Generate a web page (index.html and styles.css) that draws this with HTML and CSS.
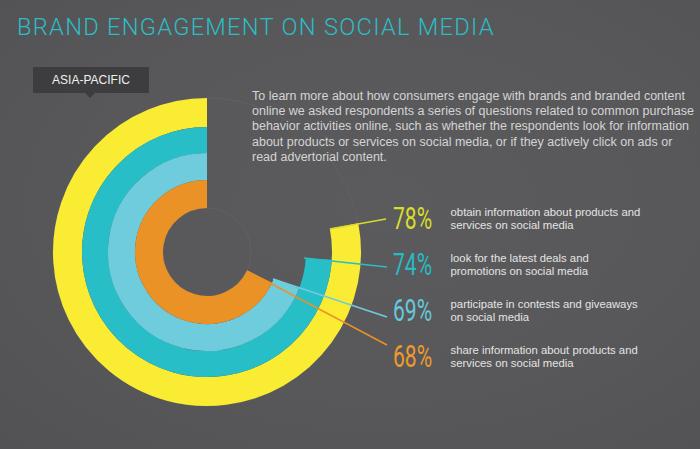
FILE: index.html
```html
<!DOCTYPE html>
<html lang="en">
<head>
<meta charset="utf-8">
<title>Brand Engagement on Social Media</title>
<link rel="stylesheet" href="styles.css">
</head>
<body>
<div class="page">
  <svg class="canvas" width="700" height="449" viewBox="0 0 700 449" aria-hidden="true">
    <circle cx="207" cy="252" r="154" fill="none" stroke="#616163" stroke-width="1"/>
    <circle cx="207" cy="252" r="44" fill="none" stroke="#616163" stroke-width="1"/>
    <path d="M207 112.5 A139.5 139.5 0 1 0 344.03 225.86" fill="none" stroke="#f9ec33" stroke-width="29"/>
    <path d="M207 140 A112 112 0 1 0 318.78 259.03" fill="none" stroke="#27bec7" stroke-width="26"/>
    <path d="M207 166.5 A85.5 85.5 0 1 0 286.5 283.47" fill="none" stroke="#6fccdd" stroke-width="27"/>
    <path d="M207 194 A58 58 0 1 0 259.48 276.7" fill="none" stroke="#ea9226" stroke-width="28"/>
    <line x1="330" y1="229" x2="386" y2="219" stroke="#d9db2c" stroke-width="1.6"/>
    <line x1="304" y1="258" x2="387" y2="267" stroke="#27bec7" stroke-width="1.6"/>
    <line x1="273" y1="279" x2="387" y2="317" stroke="#6fccdd" stroke-width="1.6"/>
    <line x1="247" y1="271" x2="387" y2="345" stroke="#ea9226" stroke-width="1.6"/>
  </svg>
  <div class="content">
    <h1 class="title">BRAND ENGAGEMENT ON SOCIAL MEDIA</h1>
    <div class="body">
      <div class="side">
        <div class="region">ASIA-PACIFIC</div>
      </div>
      <div class="main">
        <p class="intro">To learn more about how consumers engage with brands and branded content<br>online we asked respondents a series of questions related to common purchase<br>behavior activities online, such as whether the respondents look for information<br>about products or services on social media, or if they actively click on ads or<br>read advertorial content.</p>
        <ul class="legend">
          <li class="item"><span class="pct pct-yellow">78%</span><span class="desc">obtain information about products and<br>services on social media</span></li>
          <li class="item"><span class="pct pct-teal">74%</span><span class="desc">look for the latest deals and<br>promotions on social media</span></li>
          <li class="item"><span class="pct pct-light">69%</span><span class="desc">participate in contests and giveaways<br>on social media</span></li>
          <li class="item"><span class="pct pct-orange">68%</span><span class="desc">share information about products and<br>services on social media</span></li>
        </ul>
      </div>
    </div>
  </div>
</div>
</body>
</html>
```
FILE: styles.css
```css
* { box-sizing: border-box; }

html, body {
  margin: 0;
  padding: 0;
  background: #575759;
}

.page {
  display: grid;
  width: 700px;
  height: 449px;
  overflow: hidden;
  background: radial-gradient(ellipse at 55% 45%, #5b5b5d 0%, #58585a 55%, #525254 100%);
  font-family: "Liberation Sans", Arial, sans-serif;
}

.canvas,
.content {
  grid-area: 1 / 1;
}

.canvas {
  display: block;
}

.content {
  position: relative;
  display: flex;
  flex-direction: column;
}

.title {
  margin: 0;
  padding: 13px 0 0 17px;
  font-family: Roboto, "Liberation Sans", sans-serif;
  font-weight: 300;
  font-size: 23.7px;
  line-height: 28px;
  color: #2cbcc6;
  letter-spacing: 1.25px;
  white-space: nowrap;
}

.body {
  display: flex;
  margin-top: 26px;
}

.side {
  flex: 0 0 252px;
  padding-left: 33px;
}

.region {
  position: relative;
  width: 116px;
  height: 26px;
  background: #3d3d3f;
  color: #efefef;
  font-size: 12px;
  line-height: 26px;
  text-align: center;
}

.region::after {
  content: "";
  position: absolute;
  left: 52px;
  top: 26px;
  border-left: 5px solid transparent;
  border-right: 5px solid transparent;
  border-top: 5px solid #3d3d3f;
}

.main {
  flex: 1;
  margin-top: 22px;
}

.intro {
  margin: 0;
  font-size: 12.5px;
  line-height: 15.2px;
  color: #d4d4d4;
  white-space: nowrap;
}

.legend {
  list-style: none;
  margin: 40px 0 0;
  padding: 0 0 0 141px;
  display: flex;
  flex-direction: column;
  gap: 17.9px;
}

.item {
  display: flex;
  align-items: center;
  height: 28px;
}

.pct {
  flex: 0 0 54px;
  display: inline-block;
  font-family: Roboto, "Liberation Sans", sans-serif;
  font-weight: 400;
  font-size: 31px;
  line-height: 28px;
  transform: scaleX(0.68);
  transform-origin: left center;
  white-space: nowrap;
}

.pct-yellow { color: #d8dd2a; }
.pct-teal { color: #25bcc5; }
.pct-light { color: #66c8dc; }
.pct-orange { color: #ee9a2c; }

.desc {
  font-size: 11.3px;
  line-height: 13px;
  color: #e4e4e4;
  white-space: nowrap;
}
```
